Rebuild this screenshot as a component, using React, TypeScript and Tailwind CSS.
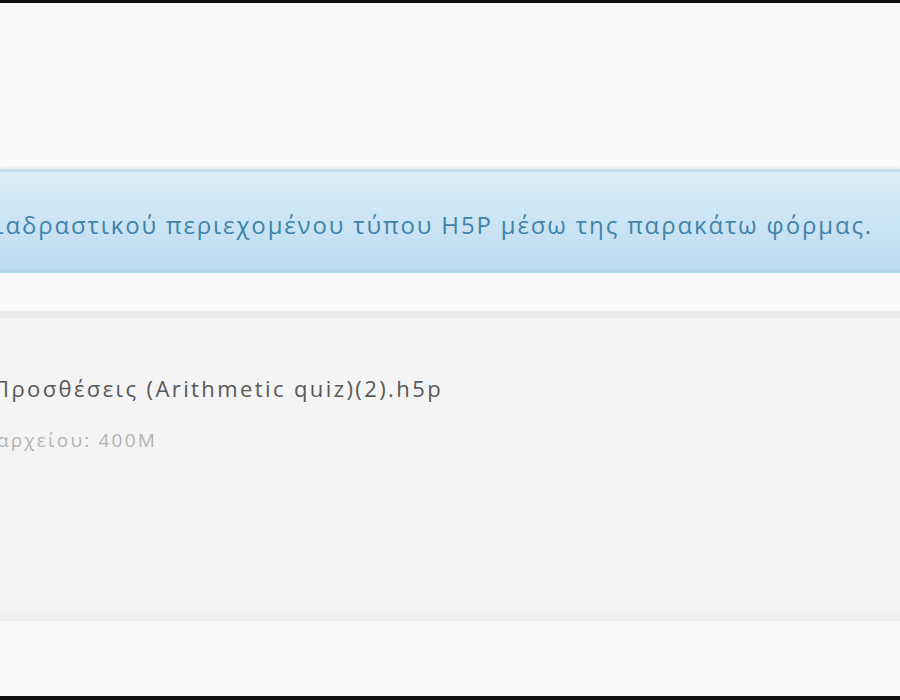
export default function App() {
  return (
    <div className="h-[700px] w-[900px] overflow-hidden bg-[#111] pt-[3px] pb-[4px] font-['Open_Sans',sans-serif]">
      <div className="flex h-full flex-col bg-[#f9f9f9]">
        {/* spacer above alert */}
        <div className="h-[166px]" />

        {/* Info alert */}
        <div className="border-y-[3px] border-t-[#c6e2f2] border-b-[#b3d7ec] bg-gradient-to-b from-[#dbedf7] to-[#bcdcf0] shadow-[0_-2px_2px_rgba(200,215,225,0.35)]">
          <div className="flex h-[98px] items-center justify-end overflow-hidden whitespace-nowrap pt-[8px] pr-[27px] text-[24px] tracking-[1.85px] text-[#3f83ab]">
            Μπορείτε να ανεβάσετε αρχεία διαδραστικού περιεχομένου τύπου H5P μέσω της παρακάτω φόρμας.
          </div>
        </div>

        <div className="h-[38px]" />

        {/* Upload well */}
        <div className="flex h-[310px] flex-col border-t-[7px] border-b-[8px] border-t-[#ececec] border-b-[#efefef] bg-[#f4f4f4]">
          <div className="h-[53px]" />
          <div className="flex w-[443px] justify-end overflow-hidden whitespace-nowrap text-[22px] leading-[34px] tracking-[2.4px] text-[#585858]">
            Προσθέσεις (Arithmetic quiz)(2).h5p
          </div>
          <div className="h-[23px]" />
          <div className="flex w-[157px] justify-end overflow-hidden whitespace-nowrap text-[19px] leading-[24px] tracking-[2.2px] text-[#b3b3b3]">
            Μέγιστο μέγεθος αρχείου: 400M
          </div>
        </div>
      </div>
    </div>
  );
}
